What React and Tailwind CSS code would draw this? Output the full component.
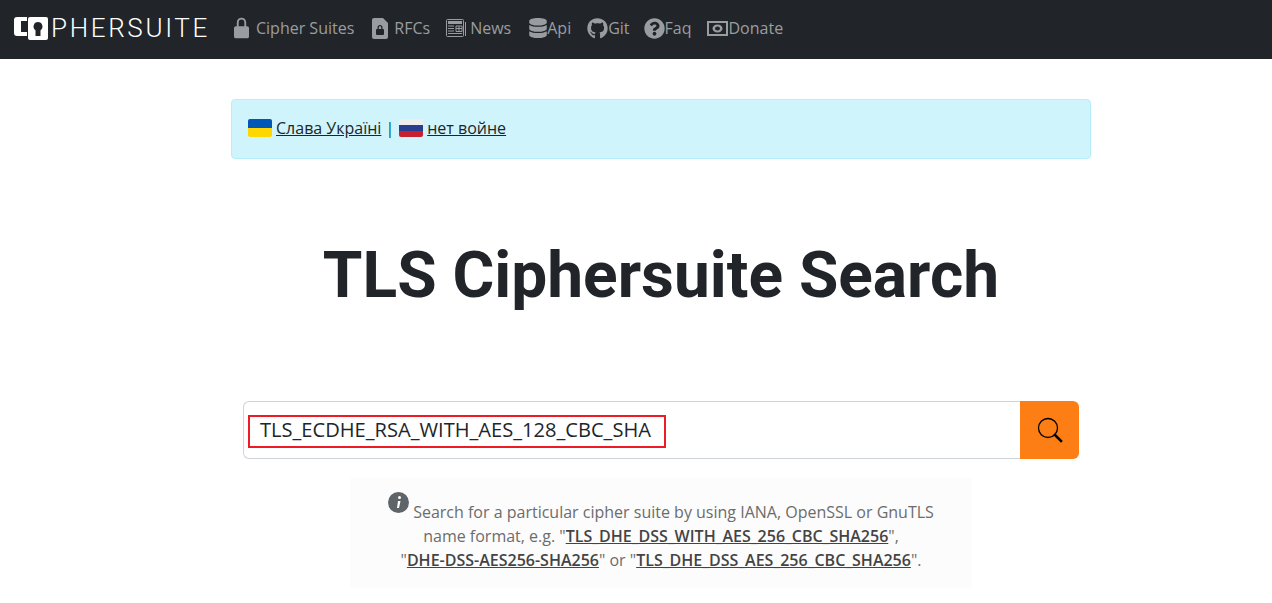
import React from "react";
import { FaDatabase, FaGithub, FaQuestionCircle } from "react-icons/fa";

function LockIcon() {
  return (
    <svg width="15" height="22" viewBox="0 0 16 22" fill="currentColor">
      <path fillRule="evenodd" d="M8 0a5 5 0 0 1 5 5v4h1a2 2 0 0 1 2 2v9a2 2 0 0 1-2 2H2a2 2 0 0 1-2-2v-9a2 2 0 0 1 2-2h1V5a5 5 0 0 1 5-5zm0 2a3 3 0 0 0-3 3v4h6V5a3 3 0 0 0-3-3z" />
    </svg>
  );
}

function FileLockIcon() {
  return (
    <svg width="16" height="21" viewBox="0 0 16 21" fill="currentColor">
      <path fillRule="evenodd" d="M2 0h9l5 5v14a2 2 0 0 1-2 2H2a2 2 0 0 1-2-2V2a2 2 0 0 1 2-2zm6 7a2.500 2.500 0 0 0-2.500 2.500V11H5a1 1 0 0 0-1 1v4a1 1 0 0 0 1 1h6a1 1 0 0 0 1-1v-4a1 1 0 0 0-1-1h-.5V9.500A2.500 2.500 0 0 0 8 7zm0 1.300c.7 0 1.200.5 1.200 1.200V11H6.800V9.500c0-.7.5-1.200 1.200-1.200z" />
    </svg>
  );
}

function NewsIcon() {
  return (
    <svg width="20" height="19" viewBox="0 0 20 19" fill="none" stroke="currentColor">
      <rect x="0.500" y="0.500" width="17" height="17" rx="1" />
      <rect x="2" y="2" width="14" height="3" fill="currentColor" stroke="none" />
      <path d="M2 7h6M2 9.500h6M2 12h6M2 14.500h14M10 7h6v5.500h-6zM10 9.500h6M13 7v5.500" />
      <path d="M19.500 3v14" strokeWidth="1" />
    </svg>
  );
}

function MoneyIcon() {
  return (
    <svg width="21" height="15" viewBox="0 0 21 15" fill="currentColor">
      <path fillRule="evenodd" d="M0 0h21v15H0zM2 2v11h17V2zM10.500 3.500c3 0 5 2 5 4s-2 4-5 4-5-2-5-4 2-4 5-4z" />
      <ellipse cx="10.500" cy="7.500" rx="2.500" ry="2" fill="#212529" />
    </svg>
  );
}

const navLinks = [
  { label: "Cipher Suites", icon: <LockIcon />, cls: "gap-[7px]" },
  { label: "RFCs", icon: <FileLockIcon />, cls: "gap-[6px] ml-[2px]" },
  { label: "News", icon: <NewsIcon />, cls: "gap-[4px]" },
  { label: "Api", icon: <FaDatabase className="w-[18px] h-[20px]" />, cls: "ml-[2px]" },
  { label: "Git", icon: <FaGithub className="w-[21px] h-[21px]" />, cls: "" },
  { label: "Faq", icon: <FaQuestionCircle className="w-[21px] h-[21px]" />, cls: "-ml-[2px]" },
  { label: "Donate", icon: <MoneyIcon />, cls: "" },
];

function Logo() {
  return (
    <div className="flex items-center">
      <svg width="35" height="23" viewBox="0 0 35 23">
        <path d="M3 0h10v19H3a3 3 0 0 1-3-3V3a3 3 0 0 1 3-3z" fill="#fff" />
        <path d="M7 4h6v11H7z" fill="#212529" />
        <path fillRule="evenodd" d="M16 0h16a2 2 0 0 1 2 2v19a2 2 0 0 1-2 2H16a2 2 0 0 1-2-2V2a2 2 0 0 1 2-2zM24 5a4.500 4.500 0 0 0-2.500 8.200V19h5v-5.800A4.500 4.500 0 0 0 24 5z" fill="#fff" />
      </svg>
      <span className="font-['Roboto',sans-serif] font-light text-[26px] leading-none text-white tracking-[2.65px] ml-[2px]">PHERSUITE</span>
    </div>
  );
}

function UkraineFlag() {
  return (
    <span className="inline-flex flex-col w-6 h-[18px] rounded-[2px] overflow-hidden">
      <span className="h-1/2 bg-[#0057b7]" />
      <span className="h-1/2 bg-[#ffd700]" />
    </span>
  );
}

function RussiaFlag() {
  return (
    <span className="inline-flex flex-col w-6 h-[18px] rounded-[2px] overflow-hidden">
      <span className="h-1/3 bg-[#eeeeee]" />
      <span className="h-1/3 bg-[#283f8f]" />
      <span className="h-1/3 bg-[#c8202f]" />
    </span>
  );
}

export default function App() {
  return (
    <div className="min-h-[603px] bg-white font-['Open_Sans',sans-serif] text-[#212529] overflow-hidden">
      <nav className="h-[59px] bg-[#212529] flex items-center pl-[14px] pb-[3px]">
        <Logo />
        <ul className="flex items-center ml-[24px] gap-[16px]">
          {navLinks.map((link) => (
            <li key={link.label} className={`flex items-center text-[16px] text-[#9a9da0] ${link.cls}`}>
              {link.icon}
              <span>{link.label}</span>
            </li>
          ))}
        </ul>
      </nav>

      <main className="w-[860px] ml-[231px]">
        <div className="mt-[40px] h-[60px] bg-[#cff4fc] border border-[#b6effb] rounded-[4px] flex items-center px-4 pb-[2px] text-[16px] text-[#055160]">
          <UkraineFlag />
          <a className="ml-1 underline text-[#212529]">Слава Україні</a>
          <span className="ml-[4px] mr-[5px]">|</span>
          <RussiaFlag />
          <a className="ml-1 underline text-[#212529]">нет войне</a>
        </div>

        <h1 className="mt-[77px] text-center font-['Roboto',sans-serif] font-bold text-[64px] leading-[77px] pt-[1px] text-[#212529]">
          TLS Ciphersuite Search
        </h1>

        <div className="mt-[87px] mx-[12px] flex h-[58px]">
          <div className="flex-1 border border-[#ced4da] border-r-0 rounded-l-[6px] flex items-center pl-[4px] pt-[2px]">
            <div className="w-[418px] h-[33px] border-2 border-[#ed1c24] flex items-center pl-[10px] pb-[2px] text-[20.1px]">
              TLS_ECDHE_RSA_WITH_AES_128_CBC_SHA
            </div>
          </div>
          <button className="w-[59px] bg-[#fd7e14] rounded-r-[6px] flex items-center justify-center">
            <svg width="26" height="26" viewBox="0 0 26 26" fill="none">
              <circle cx="11" cy="11" r="9.500" stroke="#000" strokeWidth="1.300" />
              <path d="M18 18l6 6" stroke="#000" strokeWidth="2.600" strokeLinecap="square" />
            </svg>
          </button>
        </div>

        <div className="mt-[19px] ml-[119px] w-[622px] h-[110px] bg-[#fcfcfc] text-center text-[16px] leading-[24px] text-[#6c6c6c] px-[20px] pt-[14px]">
          <svg width="21" height="21" viewBox="0 0 21 21" className="inline align-[-1px] mr-[4px] mb-[6px]">
            <circle cx="10.500" cy="10.500" r="10.500" fill="#5f6468" />
            <circle cx="11.500" cy="5.500" r="1.500" fill="#fff" />
            <path d="M10 9h2.500l-1.500 7h-2z" fill="#fff" />
          </svg>
          Search for a particular cipher suite by using IANA, OpenSSL or GnuTLS
          <br />
          name format, e.g. "<a className="underline font-semibold text-[#444444]">TLS_DHE_DSS_WITH_AES_256_CBC_SHA256</a>",
          <br />
          "<a className="underline font-semibold text-[#444444]">DHE-DSS-AES256-SHA256</a>" or "<a className="underline font-semibold text-[#444444]">TLS_DHE_DSS_AES_256_CBC_SHA256</a>".
        </div>
      </main>
    </div>
  );
}
